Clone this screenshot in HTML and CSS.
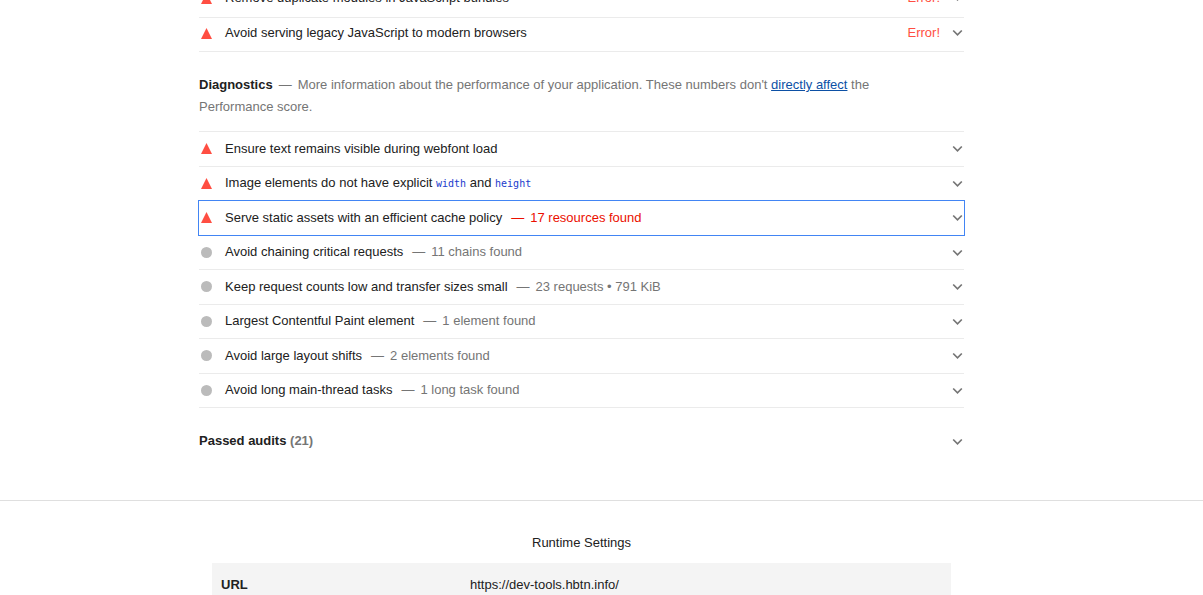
FILE: index.html
```html
<!DOCTYPE html>
<html lang="en">
<head>
<meta charset="utf-8">
<title>Performance report</title>
<link rel="stylesheet" href="styles.css">
</head>
<body>
<svg class="sprite" aria-hidden="true">
  <symbol id="chevron" viewBox="0 0 11 8"><path d="M1.2 1.5 5.5 5.8 9.8 1.5" fill="none" stroke="#757575" stroke-width="1.7"/></symbol>
  <symbol id="fail" viewBox="0 0 11 11"><path d="M5.5 0 11 11H0z" fill="#ff4e42"/></symbol>
  <symbol id="info" viewBox="0 0 11 11"><circle cx="5.5" cy="5.5" r="5.5" fill="#bbb"/></symbol>
</svg>
<main class="report">
  <div class="audits opportunities">
    <details class="audit"><summary><svg class="mark"><use href="#fail"/></svg><span class="title">Remove duplicate modules in JavaScript bundles</span><span class="error">Error!</span><svg class="chevron"><use href="#chevron"/></svg></summary></details>
    <details class="audit"><summary><svg class="mark"><use href="#fail"/></svg><span class="title">Avoid serving legacy JavaScript to modern browsers</span><span class="error">Error!</span><svg class="chevron"><use href="#chevron"/></svg></summary></details>
  </div>
  <p class="group-header"><strong>Diagnostics</strong><span class="description">More information about the performance of your application. These numbers don't <a href="#score">directly affect</a> the Performance score.</span></p>
  <div class="audits diagnostics">
    <details class="audit"><summary><svg class="mark"><use href="#fail"/></svg><span class="title">Ensure text remains visible during webfont load</span><svg class="chevron"><use href="#chevron"/></svg></summary></details>
    <details class="audit"><summary><svg class="mark"><use href="#fail"/></svg><span class="title">Image elements do not have explicit <code>width</code> and <code>height</code></span><svg class="chevron"><use href="#chevron"/></svg></summary></details>
    <details class="audit selected"><summary><svg class="mark"><use href="#fail"/></svg><span class="title">Serve static assets with an efficient cache policy<span class="value">17 resources found</span></span><svg class="chevron"><use href="#chevron"/></svg></summary></details>
    <details class="audit"><summary><svg class="mark"><use href="#info"/></svg><span class="title">Avoid chaining critical requests<span class="value">11 chains found</span></span><svg class="chevron"><use href="#chevron"/></svg></summary></details>
    <details class="audit"><summary><svg class="mark"><use href="#info"/></svg><span class="title">Keep request counts low and transfer sizes small<span class="value">23 requests • 791 KiB</span></span><svg class="chevron"><use href="#chevron"/></svg></summary></details>
    <details class="audit"><summary><svg class="mark"><use href="#info"/></svg><span class="title">Largest Contentful Paint element<span class="value">1 element found</span></span><svg class="chevron"><use href="#chevron"/></svg></summary></details>
    <details class="audit"><summary><svg class="mark"><use href="#info"/></svg><span class="title">Avoid large layout shifts<span class="value">2 elements found</span></span><svg class="chevron"><use href="#chevron"/></svg></summary></details>
    <details class="audit"><summary><svg class="mark"><use href="#info"/></svg><span class="title">Avoid long main-thread tasks<span class="value">1 long task found</span></span><svg class="chevron"><use href="#chevron"/></svg></summary></details>
  </div>
  <details class="passed"><summary><span class="title">Passed audits <span class="count">(21)</span></span><svg class="chevron"><use href="#chevron"/></svg></summary></details>
</main>
<footer class="footer">
  <table class="settings">
    <caption>Runtime Settings</caption>
    <tbody><tr><th scope="row">URL</th><td>https://dev-tools.hbtn.info/</td></tr></tbody>
  </table>
</footer>
</body>
</html>
```

FILE: styles.css
```css
* { box-sizing: border-box; }

body {
  margin: 0;
  height: 100vh;
  overflow: hidden;
  background: #fff;
  color: #212121;
  font: 13px/22px "Liberation Sans", Arial, sans-serif;
  padding-top: 1px;
}

.sprite { display: none; }

/* The report is scrolled so that its first row is partly out of view. */
.report {
  max-width: 805px;
  margin: -18px auto 0;
  padding-right: 40px;
}

.audits {
  display: grid;
  grid-auto-rows: minmax(35px, auto) minmax(34px, auto);
}

.audit {
  display: grid;
  border-bottom: 1px solid #ebebeb;
}

.diagnostics { border-top: 1px solid #ebebeb; }

summary {
  display: flex;
  align-items: center;
  list-style: none;
  cursor: pointer;
  min-height: 33px;
}

summary::-webkit-details-marker { display: none; }

.opportunities summary { padding-bottom: 3px; }

.title { flex: 1; }

.diagnostics .audit:nth-child(even) .title,
.passed .title { padding-bottom: 2px; }

.mark {
  width: 11px;
  height: 11px;
  margin: 0 13px 0 2px;
}

.chevron {
  width: 11px;
  height: 8px;
  margin-right: 1px;
}

.error {
  color: #ff4e42;
  margin-right: 12px;
}

.value { color: #757575; }

.value::before,
.description::before {
  content: "—";
  margin: 0 6px 0 9px;
}

.description::before { margin-left: 6px; }

code {
  color: #1a3bcc;
  font: 10px/16px "DejaVu Sans Mono", "Liberation Mono", monospace;
}

.selected summary { outline: 1px solid #4285f4; }

.selected .value { color: #eb0f00; }

.group-header {
  margin: 22px 0 13px;
  padding-right: 24px;
  color: #757575;
}

.group-header strong { color: #212121; }

.group-header a { color: #0c50a5; }

.passed {
  margin: 17px 0 42px;
  font-weight: 700;
}

.count { color: #757575; }

.footer {
  border-top: 1px solid #dfdfdf;
  padding: 31px 40px 0 0;
}

.settings {
  width: 100%;
  max-width: 739px;
  margin: 0 auto;
  border-collapse: collapse;
  table-layout: fixed;
}

.settings caption { padding-bottom: 9px; }

.settings tr { background: #f4f4f4; }

.settings th,
.settings td {
  padding: 11px 9px;
  text-align: left;
}

.settings th { width: 249px; }
```
